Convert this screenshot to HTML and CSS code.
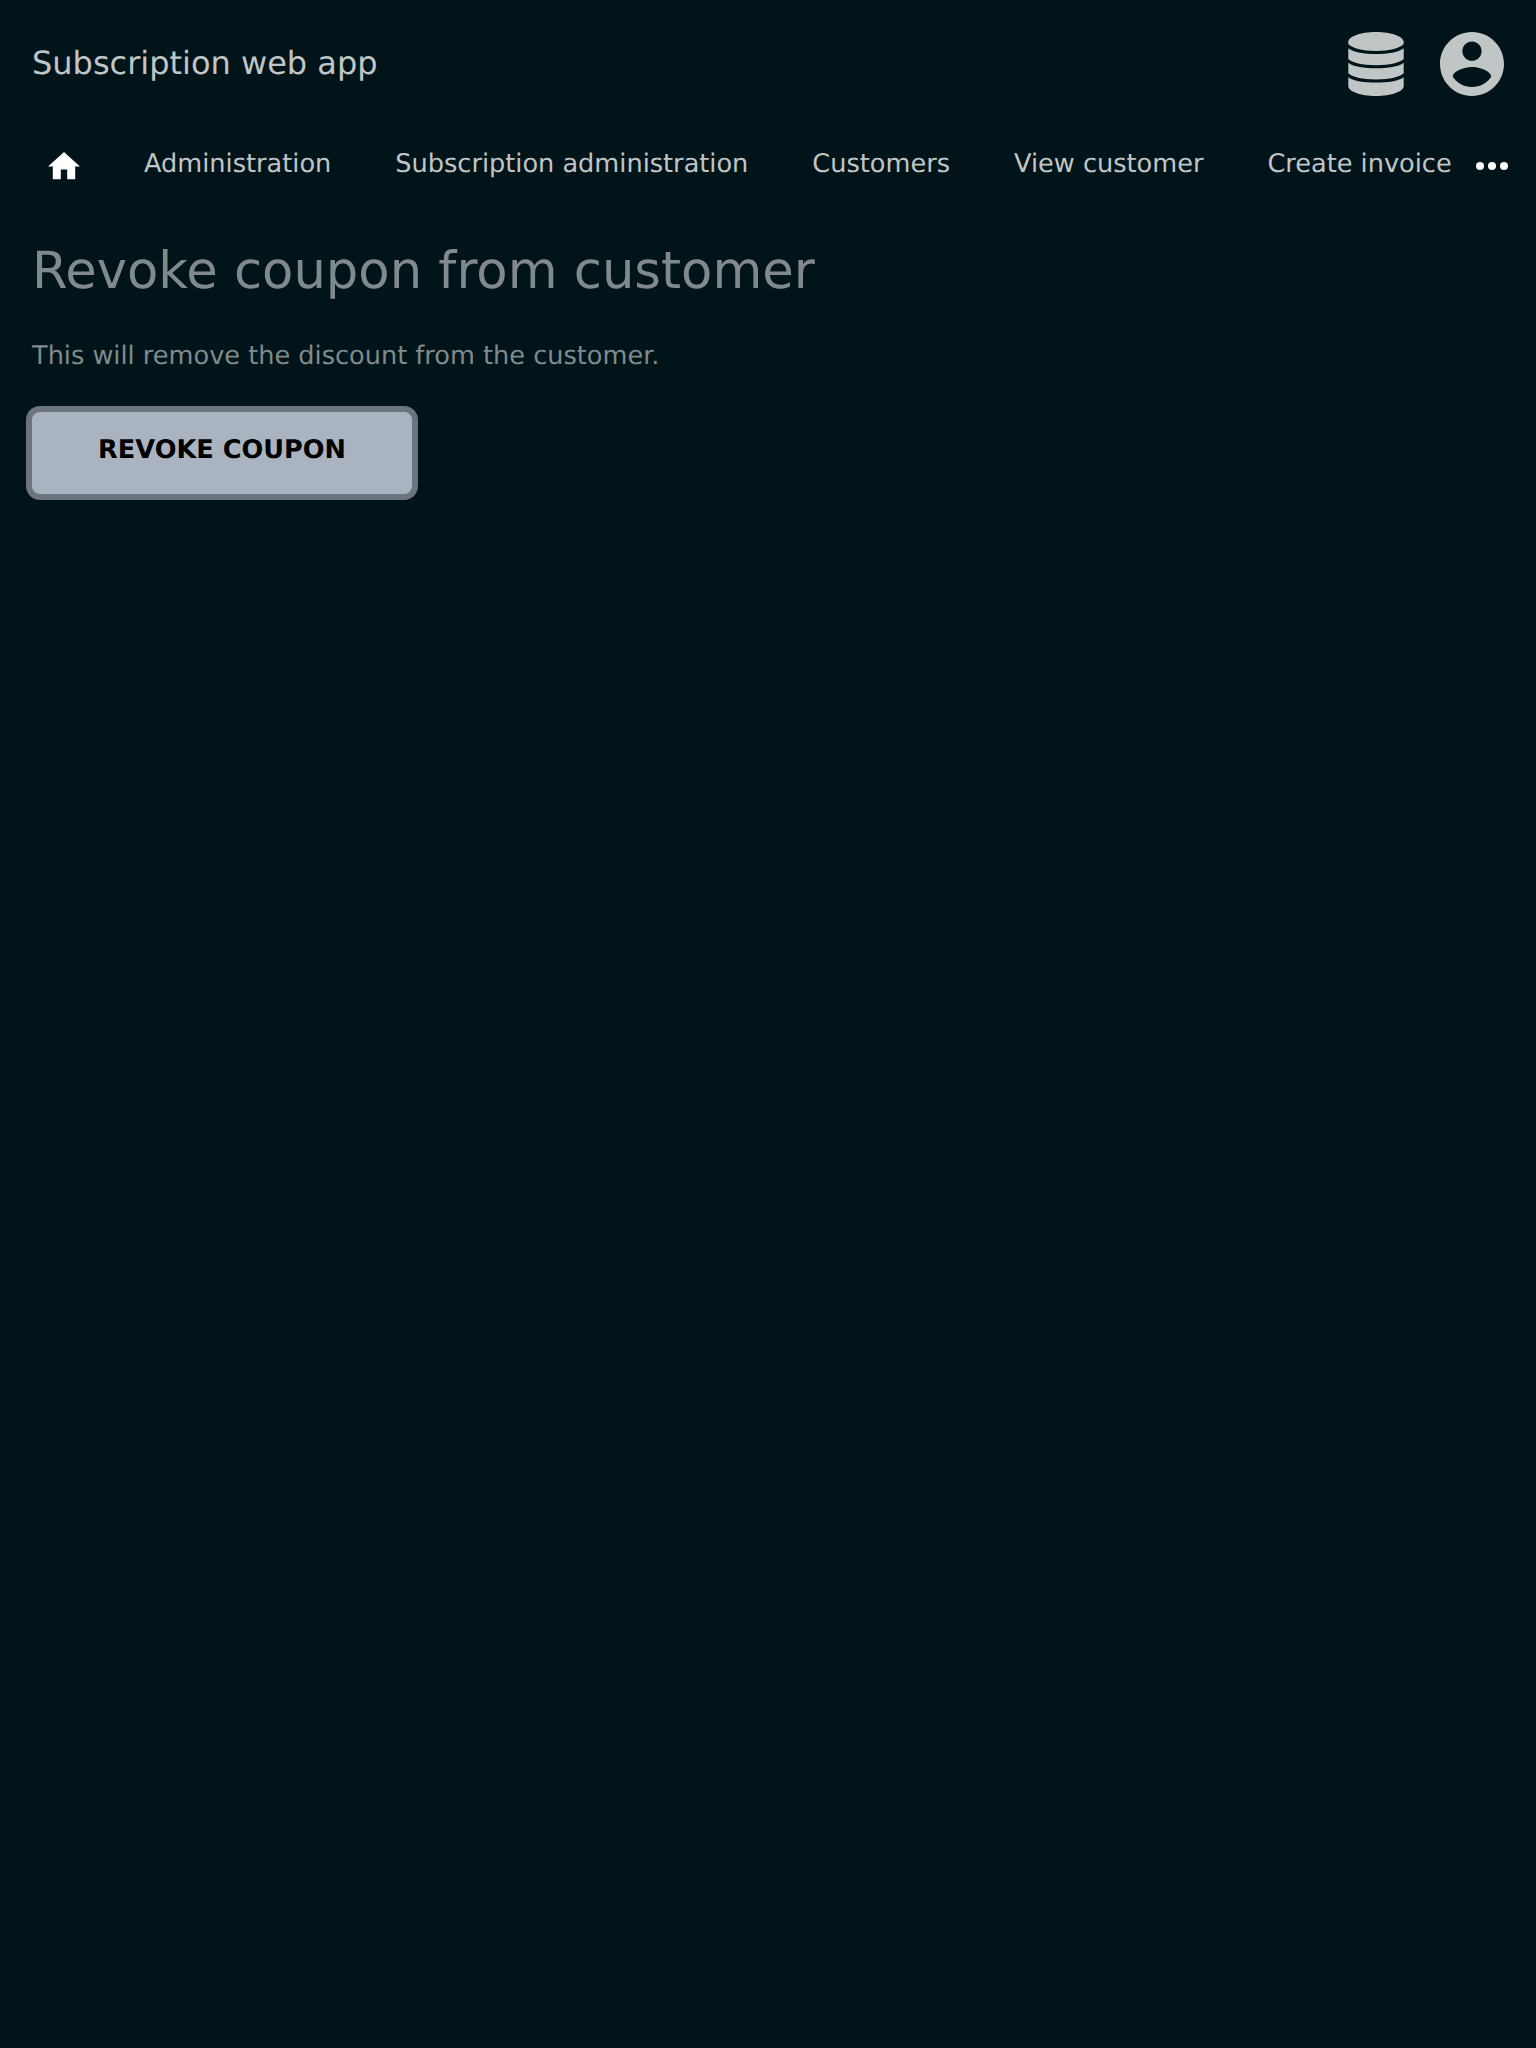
FILE: index.html
```html
<!DOCTYPE html>
<html lang="en">
<head>
<meta charset="utf-8">
<title>Revoke coupon from customer</title>
<link rel="stylesheet" href="styles.css">
</head>
<body>
<header class="header">
  <div class="brand">Subscription web app</div>
  <div class="header-icons">
    <svg class="icon-database" viewBox="0 0 56 64" aria-label="Database"><path d="M28 0C43.500 0 55.700 4.500 55.700 10V12C52 16 42 19 28 19S4 16 .3 12V10C.3 4.500 12.500 0 28 0ZM.3 16.300C6 20.500 16 22 28 22S50 20.500 55.700 16.300V27C52 30.500 42 33.200 28 33.200S4 30.500 .3 27ZM.3 30.800C6 35 16 36.300 28 36.300S50 35 55.700 30.800V41.200C52 44.800 42 47.400 28 47.400S4 44.800 .3 41.200ZM.3 45.300C6 49.300 16 50.600 28 50.600S50 49.300 55.700 45.300V54C55.700 59.500 43.500 64 28 64S.3 59.500 .3 54Z"/></svg>
    <svg class="icon-account" viewBox="2 2 20 20" aria-label="Account"><path d="M12 2C6.480 2 2 6.480 2 12s4.480 10 10 10 10-4.480 10-10S17.520 2 12 2zm0 3c1.660 0 3 1.340 3 3s-1.340 3-3 3-3-1.340-3-3 1.340-3 3-3zm0 14.200c-2.500 0-4.710-1.280-6-3.220.03-1.990 4-3.080 6-3.080 1.990 0 5.970 1.090 6 3.080-1.290 1.940-3.500 3.220-6 3.220z"/></svg>
  </div>
</header>
<nav class="nav">
  <a class="nav-home"><svg class="icon-home" viewBox="2 3 20 17" aria-label="Home"><path d="M10 20v-6h4v6h5v-8h3L12 3 2 12h3v8z"/></svg></a>
  <a class="nav-link">Administration</a>
  <a class="nav-link">Subscription administration</a>
  <a class="nav-link">Customers</a>
  <a class="nav-link">View customer</a>
  <a class="nav-link">Create invoice</a>
  <svg class="icon-more" viewBox="0 0 32 8" aria-label="More"><circle cx="4" cy="4" r="4"/><circle cx="16" cy="4" r="4"/><circle cx="28" cy="4" r="4"/></svg>
</nav>
<main class="main">
  <h1 class="title">Revoke coupon from customer</h1>
  <p class="text">This will remove the discount from the customer.</p>
  <button class="button">REVOKE COUPON</button>
</main>
</body>
</html>
```
FILE: styles.css
```css
* {
  box-sizing: border-box;
}

body {
  margin: 0;
  min-height: 100vh;
  background: #001419;
  color: #808a8c;
  font: 25.6px/38.4px "DejaVu Sans", sans-serif;
  text-rendering: geometricPrecision;
}

svg {
  display: block;
  flex: none;
  fill: currentColor;
}

.header {
  display: flex;
  justify-content: space-between;
  height: 128px;
  padding: 32px;
  color: #c0c6c6;
}

.brand {
  font-size: 32px;
  line-height: 62px;
}

.header-icons {
  display: flex;
  gap: 36px;
}

.icon-database {
  width: 56px;
  height: 64px;
}

.icon-account {
  width: 64px;
  height: 64px;
}

.nav {
  display: flex;
  align-items: center;
  height: 72px;
  padding-left: 16px;
  color: #c0c6c6;
  white-space: nowrap;
}

.nav-home {
  padding: 4px 32px 0;
  color: #fff;
}

.icon-home {
  width: 32px;
  height: 27.2px;
}

.nav-link {
  padding: 0 32px;
}

.icon-more {
  width: 32px;
  height: 8px;
  margin: 4px 0 0 -8px;
  color: #fff;
}

.main {
  padding: 33px 32px 32px;
}

.title {
  margin: 0 0 27px;
  font-size: 51.2px;
  font-weight: 400;
  line-height: 76.8px;
}

.text {
  margin: 0 0 36.8px;
}

.button {
  display: block;
  width: 380px;
  height: 82px;
  padding: 0 0 6px;
  border: 0;
  border-radius: 8px;
  background: #a9b4c0;
  box-shadow: 0 0 0 6px #6c757d;
  color: #000;
  font: 700 25.6px "DejaVu Sans", sans-serif;
  text-rendering: inherit;
}
```
